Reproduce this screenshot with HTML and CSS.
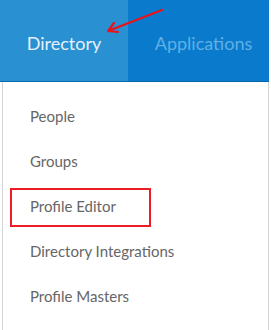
FILE: index.html
```html
<!DOCTYPE html>
<html lang="en">
<head>
    <meta charset="UTF-8">
    <title>Directory menu</title>
    <link rel="stylesheet" href="styles.css">
</head>
<body>
    <div class="nav">
        <div class="tab active">Directory</div>
        <div class="tab other">Applications</div>
        <svg class="arrow" width="70" height="40" viewBox="0 0 70 40">
            <path d="M62 10 L8 31 M8 31 L14 23 M8 31 L18 32" stroke="#e8141c" stroke-width="2.2" fill="none" stroke-linecap="round" stroke-linejoin="round"/>
        </svg>
    </div>

    <ul class="menu">
        <li>People</li>
        <li>Groups</li>
        <li class="marked">Profile Editor</li>
        <li>Directory Integrations</li>
        <li>Profile Masters</li>
    </ul>
</body>
</html>
```

FILE: styles.css
```css
body {
    margin: 0;
    width: 271px;
    font-family: Lato, "Open Sans", sans-serif;
    background: #fff;
}
.nav {
    position: relative;
    display: flex;
    width: 269px;
    height: 81px;
    background-color: #0a7bcc;
    border-bottom: 1px solid #0767ad;
}
.tab {
    display: flex;
    align-items: center;
    justify-content: center;
    width: 128px;
    padding-top: 4px;
    font-size: 18px;
    color: #5fb0e6;
    box-sizing: border-box;
}
.tab.active {
    background-color: #2990d2;
    color: #e4f1fa;
}
.tab.other {
    flex: 1;
    padding-left: 10px;
}
.arrow {
    position: absolute;
    left: 100px;
    top: 0;
}
.menu {
    list-style: none;
    margin: 0 0 0 2px;
    padding: 12px 0 0;
    width: 265px;
    height: 236px;
    border-left: 1px solid #d4d4d4;
    border-right: 1px solid #d4d4d4;
}
.menu li {
    position: relative;
    height: 45px;
    line-height: 45px;
    padding-left: 27px;
    font-size: 15px;
    color: #666;
}
.menu li.marked::after {
    content: "";
    position: absolute;
    left: 7px;
    top: 4px;
    width: 137px;
    height: 35px;
    border: 2px solid #ee1c24;
}
```
